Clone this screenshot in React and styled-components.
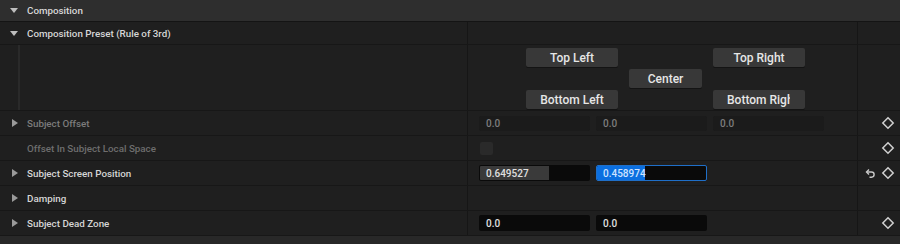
import React from 'react';
import styled, { createGlobalStyle, css } from 'styled-components';

const Global = createGlobalStyle`
  html, body { margin: 0; padding: 0; background: #262626; }
  body { font-family: Roboto, "Noto Sans", sans-serif; }
`;

const Panel = styled.div`
  width: 900px;
  height: 244px;
  background: #262626;
  overflow: hidden;
  display: flex;
  flex-direction: column;
`;

const Header = styled.div`
  height: 21px;
  background: #2e2e2e;
  border-bottom: 1px solid #141414;
  display: flex;
  align-items: center;
  padding-left: 10px;
  gap: 9px;
  color: #d8d8d8;
  font-size: 9.8px;
  font-weight: 500;
`;

const Row = styled.div`
  display: grid;
  grid-template-columns: 467px 390px 43px;
  height: ${p => p.h}px;
  background: #1f1f1f;
  border-bottom: 1px solid #171717;
`;

const NameCell = styled.div`
  display: flex;
  align-items: center;
  gap: 9px;
  padding-left: ${p => (p.open ? 10 : 12)}px;
  color: ${p => p.color || '#d6d6d6'};
  font-size: 9.8px;
  font-weight: 500;
  white-space: nowrap;
`;

const ValueCell = styled.div`
  border-left: 1px solid #161616;
  display: flex;
  align-items: center;
  gap: 6px;
  padding-left: 11px;
`;

const ExtraCell = styled.div`
  border-left: 1px solid #161616;
  display: flex;
  align-items: center;
  justify-content: flex-end;
  padding-right: 5px;
  gap: 5px;
`;

const Arrow = styled.span`
  width: 0;
  height: 0;
  ${p =>
    p.open
      ? css`
          border-left: 4px solid transparent;
          border-right: 4px solid transparent;
          border-top: 5px solid #bdbdbd;
        `
      : css`
          border-top: 4px solid transparent;
          border-bottom: 4px solid transparent;
          border-left: 6px solid #9a9a9a;
        `}
`;

const Spacer = styled.span`
  width: 6px;
`;

const PresetName = styled.div`
  padding-left: 18px;
  height: 100%;
  box-sizing: border-box;
`;

const GuideLine = styled.div`
  width: 2px;
  height: 100%;
  background: #2a2a2a;
`;

const ButtonGrid = styled.div`
  border-left: 1px solid #161616;
  display: grid;
  grid-template-columns: 92px 73px 92px;
  grid-template-rows: repeat(3, 19px);
  column-gap: 11px;
  row-gap: 2px;
  padding: 3px 0 0 58px;
  align-content: start;
`;

const PresetButton = styled.div`
  grid-column: ${p => p.col};
  grid-row: ${p => p.row};
  background: #383838;
  border-radius: 2px;
  color: #e6e6e6;
  font-size: 12px;
  font-weight: 500;
  display: flex;
  align-items: center;
  justify-content: ${p => (p.clip ? 'flex-start' : 'center')};
  padding-left: ${p => (p.clip ? 14 : 0)}px;
  box-shadow: 0 1px 0 #141414;
`;

const ButtonLabel = styled.span`
  max-width: 63px;
  overflow: hidden;
  white-space: nowrap;
`;

const NumberBox = styled.div`
  position: relative;
  width: ${p => p.w || 111}px;
  height: ${p => (p.dim ? 15 : 16)}px;
  box-sizing: border-box;
  border-radius: 2px;
  background: ${p => (p.dim ? '#1b1b1b' : '#0a0a0a')};
  border: 1px solid ${p => (p.active ? '#1f6fc8' : 'transparent')};
  color: ${p => (p.dim ? '#7e7e7e' : p.active ? '#cfe3ff' : '#e0e0e0')};
  font-size: 10px;
  font-weight: 500;
  display: flex;
  align-items: center;
  padding-left: 6px;
  overflow: hidden;
`;

const Fill = styled.div`
  position: absolute;
  left: 0;
  top: 0;
  bottom: 0;
  background: ${p => p.color};
`;

const BoxText = styled.span`
  position: relative;
`;

const Check = styled.div`
  width: 13px;
  height: 13px;
  border-radius: 2px;
  background: #2a2a2a;
  margin-left: 1px;
`;

const Footer = styled.div`
  flex: 1;
  background: #282828;
`;

function Diamond() {
  return (
    <svg width="14" height="14" viewBox="0 0 14 14">
      <path d="M7 1.8 L12.2 7 L7 12.2 L1.8 7 Z" fill="none" stroke="#d0d0d0" strokeWidth="1.5" />
    </svg>
  );
}

function Reset() {
  return (
    <svg width="11" height="10" viewBox="0 0 11 10">
      <path d="M4 1.5 L1.5 4 L4 6.5" fill="none" stroke="#c8c8c8" strokeWidth="1.4" />
      <path d="M1.8 4 H6.5 A2.6 2.6 0 0 1 6.5 9.2 H4.5" fill="none" stroke="#c8c8c8" strokeWidth="1.4" />
    </svg>
  );
}

function Num({ value, dim, active, fill, fillColor }) {
  return (
    <NumberBox dim={dim} active={active}>
      {fill && <Fill color={fillColor} style={{ width: fill }} />}
      <BoxText>{value}</BoxText>
    </NumberBox>
  );
}

function PropRow({ name, color, expandable = true, children, extra }) {
  return (
    <Row h={24}>
      <NameCell color={color}>
        {expandable ? <Arrow /> : <Spacer />}
        {name}
      </NameCell>
      <ValueCell>{children}</ValueCell>
      <ExtraCell>{extra}</ExtraCell>
    </Row>
  );
}

export default function App() {
  return (
    <Panel>
      <Global />
      <Header>
        <Arrow open />
        Composition
      </Header>
      <Row h={22}>
        <NameCell open>
          <Arrow open />
          Composition Preset (Rule of 3rd)
        </NameCell>
        <ValueCell />
        <ExtraCell />
      </Row>
      <Row h={65}>
        <PresetName>
          <GuideLine />
        </PresetName>
        <ButtonGrid>
          <PresetButton col={1} row={1}>Top Left</PresetButton>
          <PresetButton col={3} row={1}>Top Right</PresetButton>
          <PresetButton col={2} row={2}>Center</PresetButton>
          <PresetButton col={1} row={3}>Bottom Left</PresetButton>
          <PresetButton col={3} row={3} clip>
            <ButtonLabel>Bottom Right</ButtonLabel>
          </PresetButton>
        </ButtonGrid>
        <ExtraCell />
      </Row>
      <PropRow name="Subject Offset" color="#7c7c7c" extra={<Diamond />}>
        <Num value="0.0" dim />
        <Num value="0.0" dim />
        <Num value="0.0" dim />
      </PropRow>
      <PropRow name="Offset In Subject Local Space" color="#6e6e6e" expandable={false} extra={<Diamond />}>
        <Check />
      </PropRow>
      <PropRow
        name="Subject Screen Position"
        extra={
          <>
            <Reset />
            <Diamond />
          </>
        }
      >
        <Num value="0.649527" fill="63%" fillColor="#3a3a3a" />
        <Num value="0.458974" active fill="44%" fillColor="#0b6fe0" />
      </PropRow>
      <PropRow name="Damping" />
      <PropRow name="Subject Dead Zone" extra={<Diamond />}>
        <Num value="0.0" />
        <Num value="0.0" />
      </PropRow>
      <Footer />
    </Panel>
  );
}
